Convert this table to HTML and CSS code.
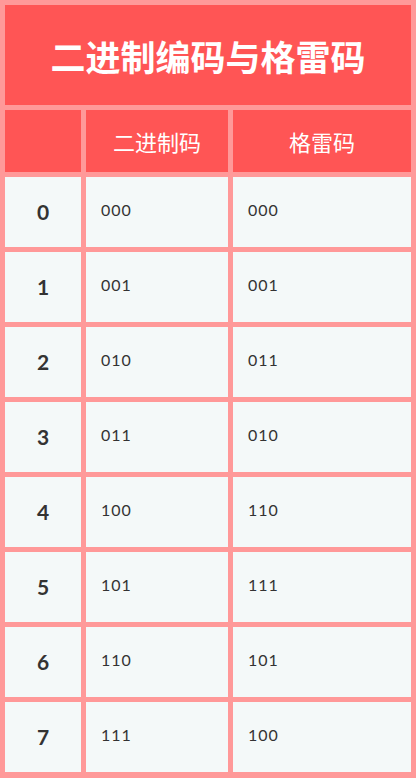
FILE: index.html
```html
<!DOCTYPE html>
<html lang="zh">
<head>
<meta charset="utf-8">
<title>二进制编码与格雷码</title>
<link rel="stylesheet" href="styles.css">
</head>
<body>
<table class="code-table">
  <colgroup>
    <col class="col-idx">
    <col class="col-bin">
    <col class="col-gray">
  </colgroup>
  <thead>
    <tr><th class="title" colspan="3">二进制编码与格雷码</th></tr>
    <tr class="head-row"><th></th><th>二进制码</th><th>格雷码</th></tr>
  </thead>
  <tbody>
    <tr><td class="idx">0</td><td class="val">000</td><td class="val">000</td></tr>
    <tr><td class="idx">1</td><td class="val">001</td><td class="val">001</td></tr>
    <tr><td class="idx">2</td><td class="val">010</td><td class="val">011</td></tr>
    <tr><td class="idx">3</td><td class="val">011</td><td class="val">010</td></tr>
    <tr><td class="idx">4</td><td class="val">100</td><td class="val">110</td></tr>
    <tr><td class="idx">5</td><td class="val">101</td><td class="val">111</td></tr>
    <tr><td class="idx">6</td><td class="val">110</td><td class="val">101</td></tr>
    <tr><td class="idx">7</td><td class="val">111</td><td class="val">100</td></tr>
  </tbody>
</table>
</body>
</html>
```
FILE: styles.css
```css
html, body {
  margin: 0;
  padding: 0;
  background: #ff9999;
}
.code-table {
  width: 416px;
  border-collapse: separate;
  border-spacing: 5px;
  background: #ff9999;
  table-layout: fixed;
  font-family: "Noto Sans CJK SC", "Noto Sans", sans-serif;
}
.col-idx { width: 76px; }
.col-bin { width: 142px; }
.col-gray { width: 178px; }
.code-table th,
.code-table td {
  padding: 0;
  box-sizing: border-box;
}
.title {
  height: 100px;
  background: #ff5555;
  color: #ffffff;
  font-size: 35px;
  font-weight: 700;
  text-align: center;
  vertical-align: middle;
  line-height: 1;
}
.head-row th {
  height: 62px;
  background: #ff5555;
  color: #ffffff;
  font-size: 22px;
  font-weight: 400;
  text-align: center;
  vertical-align: middle;
  line-height: 1;
}
.code-table td {
  height: 70px;
  background: #f4f9f9;
  color: #333333;
  vertical-align: middle;
  line-height: 20px;
}
.idx {
  text-align: center;
  font-family: "Lato", "Open Sans", sans-serif;
  font-weight: 700;
  font-size: 21px;
}
.val {
  padding-left: 15px !important;
  font-family: "Lato", "Open Sans", sans-serif;
  font-weight: 400;
  font-size: 16px;
  letter-spacing: 1px;
  padding-bottom: 4px !important;
}
```
